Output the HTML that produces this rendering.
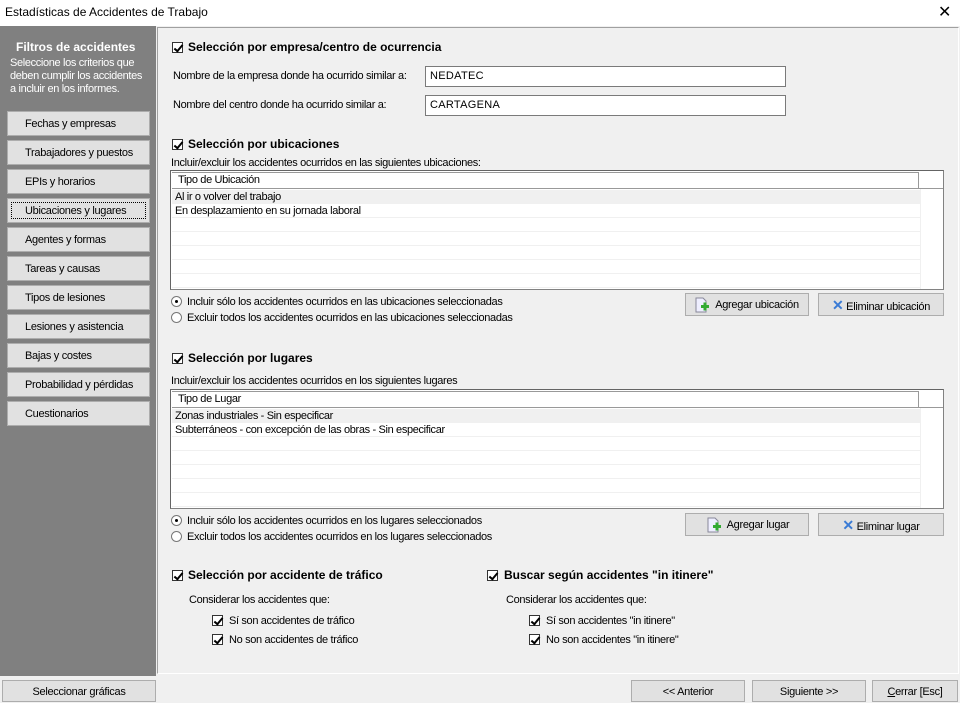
<!DOCTYPE html><html><head><meta charset="utf-8"><style>
*{margin:0;padding:0;box-sizing:border-box}
body{width:960px;height:702px;position:relative;background:#f0f0f0;font-family:"Liberation Sans",sans-serif;font-size:11px;color:#000;overflow:hidden}
.a{position:absolute;white-space:nowrap}
.t{position:absolute;white-space:nowrap;font-size:11px;letter-spacing:-0.35px;line-height:13px}
.b{font-weight:bold;font-size:12px;letter-spacing:0}
.sb{position:absolute;left:7px;width:143px;height:25px;background:#e1e1e1;border:1px solid #adadad;font-size:11px;letter-spacing:-0.3px;padding-left:17px;line-height:25px}
.cb{position:absolute;width:11px;height:11px;border:1px solid #333;background:#fff}
.cb::after{content:"";position:absolute;left:3px;top:0px;width:3px;height:7px;border:solid #000;border-width:0 2px 2px 0;transform:rotate(40deg)}
.rb{position:absolute;width:11px;height:11px;border:1px solid #777;border-radius:50%;background:#fff}
.rb.on::after{content:"";position:absolute;left:3px;top:3px;width:3px;height:3px;border-radius:50%;background:#000}
.inp{position:absolute;height:21px;background:#fff;border:1px solid #7a7a7a;font-size:11px;padding:3px 4px;letter-spacing:0.3px}
.list{position:absolute;left:170px;width:774px;height:120px;background:#fff;border:1px solid #828282;border-top-color:#646464;border-left-color:#646464;overflow:hidden}
.list .h{position:absolute;left:1px;top:1px;width:747px;height:17px;border:1px solid #999;border-left:none;background:#fff;padding-left:6px;line-height:15px;font-size:11px;letter-spacing:-0.35px}
.list .h2{position:absolute;left:748px;top:1px;width:24px;height:17px;border-bottom:1px solid #999}
.list .r{position:absolute;left:1px;width:748px;height:14px;border-bottom:1px solid #f0f0f0;padding-left:3px;font-size:11px;line-height:14px;letter-spacing:-0.35px}
.list .col{position:absolute;left:749px;top:18px;width:1px;height:100px;background:#f0f0f0}
.btn{position:absolute;height:23px;background:#e1e1e1;border:1px solid #adadad;font-size:11px;letter-spacing:-0.3px;text-align:center;line-height:22px}
</style></head><body>
<div class="a" style="left:0;top:0;width:960px;height:26px;background:#fff"></div>
<div class="a" style="left:5px;top:5px;font-size:12px">Estadísticas de Accidentes de Trabajo</div>
<div class="a" style="left:938px;top:2px;font-size:16px">✕</div>

<div class="a" style="left:0;top:26px;width:156px;height:650px;background:#808080"></div>
<div class="a" style="left:16px;top:40px;color:#fff;font-weight:bold;font-size:12px">Filtros de accidentes</div>
<div class="a" style="left:10px;top:57px;color:#fff;font-size:11px;line-height:13px;letter-spacing:-0.35px">Seleccione los criterios que<br>deben cumplir los accidentes<br>a incluir en los informes.</div>
<div class="sb" style="top:111px">Fechas y empresas</div>
<div class="sb" style="top:140px">Trabajadores y puestos</div>
<div class="sb" style="top:169px">EPIs y horarios</div>
<div class="sb" style="top:198px"><div style="position:absolute;left:3px;top:3px;right:3px;bottom:3px;border:1px dotted #000"></div>Ubicaciones y lugares</div>
<div class="sb" style="top:227px">Agentes y formas</div>
<div class="sb" style="top:256px">Tareas y causas</div>
<div class="sb" style="top:285px">Tipos de lesiones</div>
<div class="sb" style="top:314px">Lesiones y asistencia</div>
<div class="sb" style="top:343px">Bajas y costes</div>
<div class="sb" style="top:372px">Probabilidad y pérdidas</div>
<div class="sb" style="top:401px">Cuestionarios</div>

<div class="a" style="left:157px;top:27px;width:802px;height:647px;border:1px solid #a0a0a0;border-right-color:#fff;border-bottom-color:#fff"></div>

<div class="cb" style="left:172px;top:42px"></div>
<div class="t b" style="left:188px;top:41px">Selección por empresa/centro de ocurrencia</div>
<div class="t" style="left:173px;top:70px">Nombre de la empresa donde ha ocurrido similar a:</div>
<div class="inp" style="left:425px;top:66px;width:361px">NEDATEC</div>
<div class="t" style="left:173px;top:99px">Nombre del centro donde ha ocurrido similar a:</div>
<div class="inp" style="left:425px;top:95px;width:361px">CARTAGENA</div>

<div class="cb" style="left:172px;top:139px"></div>
<div class="t b" style="left:188px;top:138px">Selección por ubicaciones</div>
<div class="t" style="left:171px;top:157px">Incluir/excluir los accidentes ocurridos en las siguientes ubicaciones:</div>
<div class="list" style="top:170px">
<div class="h">Tipo de Ubicación</div><div class="h2"></div>
<div class="r" style="top:19px;background:#f0f0f0">Al ir o volver del trabajo</div>
<div class="r" style="top:33px">En desplazamiento en su jornada laboral</div>
<div class="r" style="top:47px"></div><div class="r" style="top:61px"></div><div class="r" style="top:75px"></div><div class="r" style="top:89px"></div><div class="r" style="top:103px"></div>
<div class="col"></div>
</div>
<div class="rb on" style="left:171px;top:296px"></div>
<div class="t" style="left:187px;top:296px">Incluir sólo los accidentes ocurridos en las ubicaciones seleccionadas</div>
<div class="rb" style="left:171px;top:312px"></div>
<div class="t" style="left:187px;top:312px">Excluir todos los accidentes ocurridos en las ubicaciones seleccionadas</div>
<div class="btn" style="left:685px;top:293px;width:124px">
<svg style="position:absolute;left:8px;top:3px" width="16" height="16"><path d="M2 1h7l3 3v11H2z" fill="#eef" stroke="#889"/><rect x="7" y="8" width="8" height="3" fill="#3a3"/><rect x="9.5" y="5.5" width="3" height="8" fill="#3a3"/></svg>
<span style="padding-left:20px">Agregar ubicación</span></div>
<div class="btn" style="left:818px;top:293px;width:126px"><span style="color:#3a7bd5;font-weight:bold;font-size:14px">✕</span> Eliminar ubicación</div>

<div class="cb" style="left:172px;top:353px"></div>
<div class="t b" style="left:188px;top:352px">Selección por lugares</div>
<div class="t" style="left:171px;top:375px">Incluir/excluir los accidentes ocurridos en los siguientes lugares</div>
<div class="list" style="top:389px">
<div class="h">Tipo de Lugar</div><div class="h2"></div>
<div class="r" style="top:19px;background:#f0f0f0">Zonas industriales - Sin especificar</div>
<div class="r" style="top:33px">Subterráneos - con excepción de las obras - Sin especificar</div>
<div class="r" style="top:47px"></div><div class="r" style="top:61px"></div><div class="r" style="top:75px"></div><div class="r" style="top:89px"></div><div class="r" style="top:103px"></div>
<div class="col"></div>
</div>
<div class="rb on" style="left:171px;top:515px"></div>
<div class="t" style="left:187px;top:515px">Incluir sólo los accidentes ocurridos en los lugares seleccionados</div>
<div class="rb" style="left:171px;top:531px"></div>
<div class="t" style="left:187px;top:531px">Excluir todos los accidentes ocurridos en los lugares seleccionados</div>
<div class="btn" style="left:685px;top:513px;width:124px">
<svg style="position:absolute;left:20px;top:3px" width="16" height="16"><path d="M2 1h7l3 3v11H2z" fill="#eef" stroke="#889"/><rect x="7" y="8" width="8" height="3" fill="#3a3"/><rect x="9.5" y="5.5" width="3" height="8" fill="#3a3"/></svg>
<span style="padding-left:22px">Agregar lugar</span></div>
<div class="btn" style="left:818px;top:513px;width:126px"><span style="color:#3a7bd5;font-weight:bold;font-size:14px">✕</span> Eliminar lugar</div>

<div class="cb" style="left:172px;top:570px"></div>
<div class="t b" style="left:188px;top:569px">Selección por accidente de tráfico</div>
<div class="t" style="left:189px;top:594px">Considerar los accidentes que:</div>
<div class="cb" style="left:212px;top:615px"></div>
<div class="t" style="left:229px;top:615px">Sí son accidentes de tráfico</div>
<div class="cb" style="left:212px;top:634px"></div>
<div class="t" style="left:229px;top:634px">No son accidentes de tráfico</div>

<div class="cb" style="left:487px;top:570px"></div>
<div class="t b" style="left:504px;top:569px">Buscar según accidentes "in itinere"</div>
<div class="t" style="left:506px;top:594px">Considerar los accidentes que:</div>
<div class="cb" style="left:529px;top:615px"></div>
<div class="t" style="left:546px;top:615px">Sí son accidentes  "in itinere"</div>
<div class="cb" style="left:529px;top:634px"></div>
<div class="t" style="left:546px;top:634px">No son accidentes  "in itinere"</div>

<div class="btn" style="left:2px;top:680px;width:154px;height:22px">Seleccionar gráficas</div>
<div class="btn" style="left:631px;top:680px;width:114px;height:22px">&lt;&lt; Anterior</div>
<div class="btn" style="left:752px;top:680px;width:114px;height:22px">Siguiente &gt;&gt;</div>
<div class="btn" style="left:872px;top:680px;width:86px;height:22px"><u>C</u>errar [Esc]</div>
</body></html>
